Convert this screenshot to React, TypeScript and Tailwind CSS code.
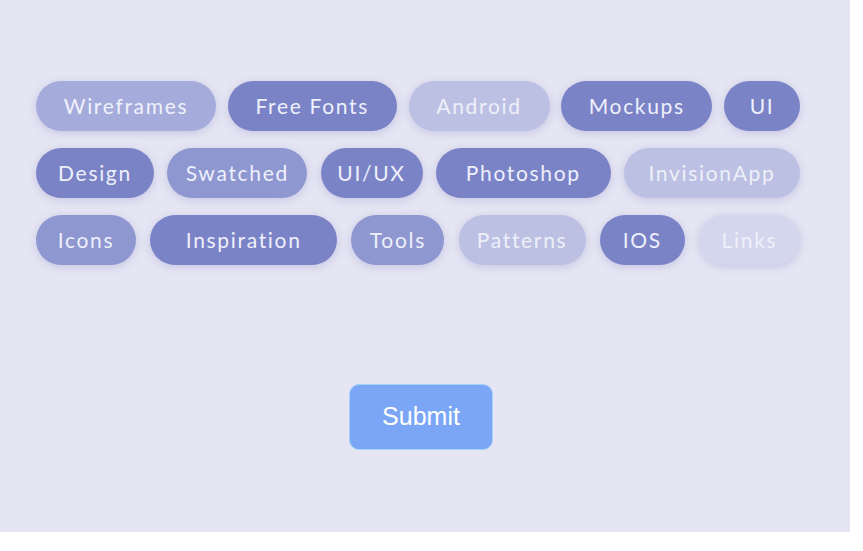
/**
 * Tag picker: three rows of soft lavender pills, then a Submit button.
 * Each pill's tone is just a different strength of the same indigo.
 */

type Tag = { label: string; w: string; tone: string }

// tone classes are written out in full so Tailwind picks them up
const DARK = 'bg-[#7b83c7] text-[#eef0fb]'
const MID = 'bg-[#8f97d0] text-[#eef0fb]'
const SOFT = 'bg-[#a5acdb] text-[#f1f2fb]'
const PALE = 'bg-[#bcc0e3] text-[#eef0f9]'
const FAINT = 'bg-[#d4d6ee] text-[#eef0f9]'

const ROWS: Tag[][] = [
  [
    { label: 'Wireframes', w: 'w-[180px]', tone: SOFT },
    { label: 'Free Fonts', w: 'w-[169px]', tone: DARK },
    { label: 'Android', w: 'w-[141px]', tone: PALE },
    { label: 'Mockups', w: 'w-[151px]', tone: DARK },
    { label: 'UI', w: 'w-[76px]', tone: DARK },
  ],
  [
    { label: 'Design', w: 'w-[118px]', tone: DARK },
    { label: 'Swatched', w: 'w-[140px]', tone: MID },
    { label: 'UI/UX', w: 'w-[102px]', tone: DARK },
    { label: 'Photoshop', w: 'w-[175px]', tone: DARK },
    { label: 'InvisionApp', w: 'w-[176px]', tone: PALE },
  ],
  [
    { label: 'Icons', w: 'w-[100px]', tone: MID },
    { label: 'Inspiration', w: 'w-[187px]', tone: DARK },
    { label: 'Tools', w: 'w-[93px]', tone: MID },
    { label: 'Patterns', w: 'w-[127px]', tone: PALE },
    { label: 'IOS', w: 'w-[85px]', tone: DARK },
    { label: 'Links', w: 'w-[101px]', tone: FAINT },
  ],
]

function Pill({ t }: { t: Tag }) {
  return (
    <div
      className={`${t.w} ${t.tone} h-[50px] rounded-full flex items-center justify-center
                  text-[21px] tracking-[0.08em] shadow-[0_2px_9px_rgba(110,115,190,0.28)]`}
      style={{ fontFamily: 'Lato, "Open Sans", sans-serif' }}
    >
      {t.label}
    </div>
  )
}

export default function App() {
  return (
    <div className="w-[850px] h-[532px] bg-[#e6e5f3] pt-[81px] pl-[36px]">
      <div className="w-[764px] flex flex-col gap-[17px]">
        {ROWS.map((row, i) => (
          <div key={i} className="flex justify-between">
            {row.map((t) => <Pill key={t.label} t={t} />)}
          </div>
        ))}
      </div>

      <button
        className="mt-[119px] ml-[313px] w-[144px] h-[66px] rounded-[10px] bg-[#7ba6f5]
                   border border-[#a2d2f8] text-white text-[25px]"
        style={{ fontFamily: '"Liberation Sans", Arial, sans-serif' }}
      >
        Submit
      </button>
    </div>
  )
}
